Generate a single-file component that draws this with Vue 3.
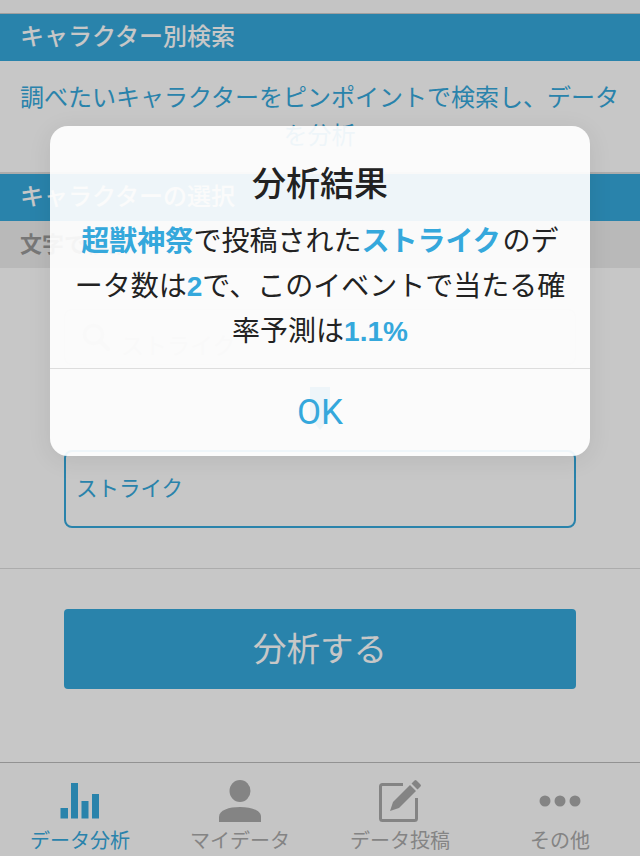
<script setup>
const tabs = [
  { label: "データ分析", icon: "chart", active: true },
  { label: "マイデータ", icon: "person" },
  { label: "データ投稿", icon: "edit" },
  { label: "その他", icon: "dots" },
];
</script>

<template>
  <div class="page">
    <div class="top-strip"></div>
    <h2 class="section-head">キャラクター別検索</h2>
    <p class="lead">調べたいキャラクターをピンポイントで検索し、データを分析</p>
    <h2 class="section-head">キャラクターの選択</h2>
    <div class="sub-head">文字で検索</div>

    <div class="picker">
      <div class="search-box">
        <svg class="search-icon" viewBox="0 0 28 28">
          <circle cx="11.5" cy="11.5" r="9" fill="none" stroke="#e6e6e6" stroke-width="3.5" />
          <path d="M18 18l8 8" stroke="#ddd" stroke-width="4" stroke-linecap="round" />
        </svg>
        <span>ストライク</span>
      </div>
      <svg class="arrow" viewBox="0 0 20 43">
        <path d="M0 0h20v30L10 43 0 30z" fill="#35a8dc" />
      </svg>
      <div class="result-box">ストライク</div>
    </div>

    <div class="action">
      <button class="analyze">分析する</button>
    </div>

    <nav class="tabbar">
      <div v-for="tab in tabs" :key="tab.label" class="tab" :class="{ active: tab.active }">
        <svg class="tab-icon" viewBox="0 0 44 44">
          <g v-if="tab.icon === 'chart'" fill="currentColor">
            <rect x="2.5" y="29" width="7.5" height="10.5" />
            <rect x="13" y="4" width="7" height="35.5" />
            <rect x="23.5" y="22" width="7" height="17.5" />
            <rect x="34" y="15" width="7" height="24.5" />
          </g>
          <g v-else-if="tab.icon === 'person'" fill="currentColor">
            <ellipse cx="22" cy="12" rx="10.5" ry="11" />
            <path d="M1 43v-5c0-7 10-10 21-10s21 3 21 10v5z" />
          </g>
          <g v-else-if="tab.icon === 'edit'">
            <path d="M25 5.500H4.500a2 2 0 0 0-2 2v32a2 2 0 0 0 2 2h32a2 2 0 0 0 2-2V19" fill="none" stroke="currentColor" stroke-width="3" />
            <path d="M12 32l3-9L32 6l6 6-17 17zM33.500 4.500l3-3q1-1 2 0l4 4q1 1 0 2l-3 3z" fill="currentColor" />
          </g>
          <g v-else fill="currentColor">
            <circle cx="7" cy="22" r="5.500" />
            <circle cx="22" cy="22" r="5.500" />
            <circle cx="37" cy="22" r="5.500" />
          </g>
        </svg>
        <span>{{ tab.label }}</span>
      </div>
    </nav>

    <div class="overlay">
      <div class="dialog">
        <div class="dialog-body">
          <h3>分析結果</h3>
          <p>
            <b>超獣神祭</b>で投稿された<b>ストライク</b> のデータ数は<b>2</b>で、このイベントで当たる確率予測は<b>1.1%</b>
          </p>
        </div>
        <div class="dialog-ok">OK</div>
      </div>
    </div>
  </div>
</template>

<style scoped>
.page {
  position: relative;
  display: flex;
  flex-direction: column;
  height: 856px;
  overflow: hidden;
  background: #fff;
  font-family: "Liberation Sans", "Noto Sans CJK JP", sans-serif;
}

.top-strip {
  height: 13px;
  border-bottom: 1px solid #ccc;
  background: #fbfbfb;
}

.section-head {
  margin: 0;
  height: 47px;
  padding-left: 20px;
  background: #35a8dc;
  color: #fff;
  font-size: 24px;
  font-weight: 500;
  line-height: 46px;
}

.lead {
  margin: 0;
  padding: 18px 20px 17px 19px;
  border-bottom: 2px solid #ddd;
  color: #35a8dc;
  font-size: 24px;
  line-height: 38px;
  text-align: center;
}

.sub-head {
  height: 47px;
  padding-left: 20px;
  background: #eee;
  color: #999;
  font-size: 22px;
  font-weight: 700;
  line-height: 47px;
}

.picker {
  display: flex;
  flex-direction: column;
  align-items: center;
  padding: 41px 64px 40px;
  border-bottom: 1px solid #ddd;
}

.search-box {
  display: flex;
  align-items: center;
  gap: 11px;
  box-sizing: border-box;
  width: 100%;
  height: 56px;
  padding: 13px 17px 0;
  border: 1px solid #f0f0f0;
  border-radius: 8px;
  color: #ddd;
  font-size: 23px;
}

.search-icon {
  width: 28px;
  height: 28px;
  margin-top: -13px;
}

.arrow {
  width: 20px;
  height: 43px;
  margin: 22px 0 20px;
}

.result-box {
  box-sizing: border-box;
  width: 100%;
  height: 78px;
  padding-left: 10px;
  border: 2px solid #35a8dc;
  border-radius: 8px;
  color: #35a8dc;
  font-size: 21.500px;
  line-height: 74px;
}

.action {
  flex: 1;
  padding: 40px 64px 0;
}

.analyze {
  display: block;
  width: 100%;
  height: 80px;
  padding: 0 0 6px;
  border: 0;
  border-radius: 4px;
  background: #35a8dc;
  color: #fff;
  font-family: inherit;
  font-size: 33.500px;
}

.tabbar {
  display: grid;
  grid-template-columns: repeat(4, 1fr);
  height: 93px;
  border-top: 1px solid #bbb;
  background: #fdfdfd;
}

.tab {
  display: flex;
  flex-direction: column;
  align-items: center;
  padding-top: 16px;
  color: #aaa;
  font-size: 20px;
  line-height: 28px;
}

.tab.active {
  color: #35a8dc;
}

.tab-icon {
  display: block;
  width: 44px;
  height: 44px;
  margin-bottom: 4px;
}

.overlay {
  position: absolute;
  inset: 0;
  display: flex;
  justify-content: center;
  align-items: flex-start;
  padding-top: 126px;
  background: rgba(0, 0, 0, 0.22);
}

.dialog {
  width: 540px;
  border-radius: 18px;
  background: rgba(255, 255, 255, 0.92);
  box-shadow: 0 4px 24px rgba(0, 0, 0, 0.08);
  overflow: hidden;
}

.dialog-body {
  padding: 37px 20px 14px;
  border-bottom: 1px solid #ddd;
  text-align: center;
}

.dialog-body h3 {
  margin: 0;
  color: #222;
  font-size: 34px;
  font-weight: 500;
  line-height: 42px;
}

.dialog-body p {
  margin: 14px 0 0;
  color: #222;
  font-size: 28px;
  line-height: 45px;
  word-spacing: -6px;
}

.dialog-body b {
  color: #35a8dc;
  font-weight: 700;
}

.dialog-ok {
  height: 87px;
  color: #35a8dc;
  font-family: Roboto, sans-serif;
  font-size: 35px;
  font-weight: 400;
  line-height: 88px;
  text-align: center;
}
</style>
